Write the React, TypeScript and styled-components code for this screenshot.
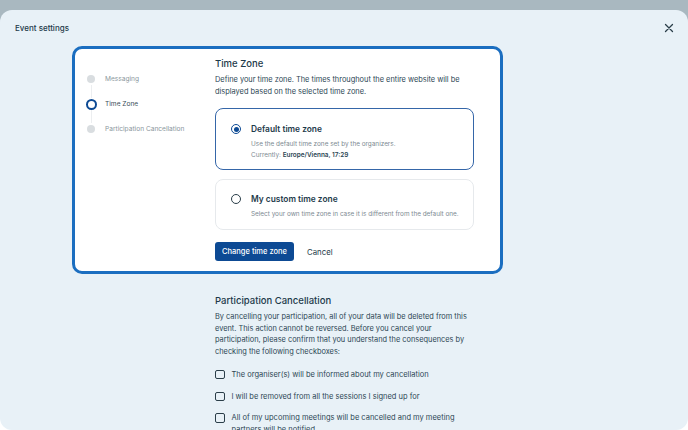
import * as React from 'react';
import styled, { createGlobalStyle } from 'styled-components';

const GlobalStyle = createGlobalStyle`
  html, body {
    margin: 0;
    padding: 0;
    background: linear-gradient(#a9b8c0 0, #a9b8c0 40px, #ffffff 40px);
    font-family: Inter, 'Noto Sans', sans-serif;
    color: #1d3a4a;
  }
  * { box-sizing: border-box; }
`;

const Backdrop = styled.div`
  width: 688px;
  height: 430px;
  padding-top: 10px;
  overflow: hidden;
`;

const Panel = styled.div`
  height: 420px;
  background: #e8f1f7;
  border-radius: 12px;
  display: flex;
  flex-direction: column;
  overflow: hidden;
`;

const Header = styled.div`
  flex: 0 0 36px;
  display: flex;
  align-items: center;
  justify-content: space-between;
  padding: 0 14px 0 15px;
`;

const HeaderTitle = styled.div`
  font-size: 8px;
  font-weight: 500;
  color: #1d3a4a;
`;

const CloseButton = styled.button`
  border: none;
  background: none;
  padding: 0;
  width: 10px;
  height: 10px;
  display: flex;
  cursor: pointer;
`;

const Body = styled.div`
  flex: 0 0 auto;
  padding: 0 0 0 72px;
`;

const HighlightCard = styled.div`
  width: 431px;
  height: 228px;
  background: #ffffff;
  border: 3px solid #1b6ec0;
  border-radius: 10px;
  display: flex;
  padding: 8px 0 9px 0;
`;

const Stepper = styled.div`
  flex: 0 0 140px;
  padding: 16px 0 0 10px;
  display: flex;
  flex-direction: column;
`;

const Step = styled.div`
  display: flex;
  align-items: center;
  gap: 8px;
  height: 12px;
`;

const DotSlot = styled.span`
  width: 12px;
  height: 12px;
  display: flex;
  align-items: center;
  justify-content: center;
  flex: 0 0 auto;
`;

const Dot = styled.span<{ active?: boolean }>`
  border-radius: 50%;
  width: ${(p) => (p.active ? 11 : 8)}px;
  height: ${(p) => (p.active ? 11 : 8)}px;
  border: ${(p) => (p.active ? '2px solid #0d4a94' : 'none')};
  background: ${(p) => (p.active ? '#ffffff' : '#d9dde0')};
`;

const Connector = styled.span`
  width: 1px;
  height: 13px;
  margin-left: 5.5px;
  background: #eceef0;
`;

const StepLabel = styled.span<{ active?: boolean }>`
  font-size: 6.6px;
  color: ${(p) => (p.active ? '#3a4d58' : '#8b979e')};
  white-space: nowrap;
`;

const Content = styled.div`
  flex: 1;
  min-width: 0;
  padding-right: 26px;
  display: flex;
  flex-direction: column;
`;

const SectionTitle = styled.h2`
  margin: 0;
  font-size: 9.5px;
  font-weight: 500;
  color: #1d3a4a;
  line-height: 14px;
`;

const Paragraph = styled.p`
  margin: 3px 0 0 0;
  font-size: 7.4px;
  line-height: 11.7px;
  color: #2c4654;
`;

const OptionCard = styled.div<{ selected?: boolean }>`
  margin-top: ${(p) => (p.selected ? 11 : 9)}px;
  height: ${(p) => (p.selected ? 62 : 51)}px;
  border: 1px solid ${(p) => (p.selected ? '#3566a8' : '#e6e9ec')};
  border-radius: 8px;
  padding: ${(p) => (p.selected ? '14px 8px 0 15px' : '13px 8px 0 15px')};
  display: flex;
  gap: 10px;
`;

const Radio = styled.span<{ checked?: boolean }>`
  width: 10px;
  height: 10px;
  margin-top: 1px;
  border-radius: 50%;
  border: 1.4px solid ${(p) => (p.checked ? '#0d4a94' : '#2a3e49')};
  flex: 0 0 auto;
  display: flex;
  align-items: center;
  justify-content: center;
  &::after {
    content: '';
    display: ${(p) => (p.checked ? 'block' : 'none')};
    width: 5px;
    height: 5px;
    border-radius: 50%;
    background: #0d4a94;
  }
`;

const OptionText = styled.div`
  display: flex;
  flex-direction: column;
`;

const OptionTitle = styled.div`
  font-size: 8.4px;
  font-weight: 600;
  color: #1d3a4a;
  line-height: 12px;
`;

const OptionHint = styled.div`
  margin-top: 4px;
  font-size: 6.4px;
  line-height: 10.5px;
  color: #7d8a92;
  white-space: nowrap;
  & b {
    font-weight: 600;
    color: #2c4654;
  }
`;

const Actions = styled.div`
  display: flex;
  align-items: center;
  gap: 13px;
  margin-top: 12px;
`;

const PrimaryButton = styled.button`
  border: none;
  border-radius: 3px;
  background: #0d4a94;
  color: #fff;
  font-family: inherit;
  font-size: 7.5px;
  font-weight: 500;
  height: 19px;
  width: 79px;
  padding: 0;
`;

const TextButton = styled.button`
  border: none;
  background: none;
  font-family: inherit;
  font-size: 7.8px;
  color: #1d3a4a;
  padding: 0;
`;

const Lower = styled.div`
  padding: 20px 0 0 143px;
  width: 402px;
`;

const CheckList = styled.div`
  margin-top: 11px;
  display: flex;
  flex-direction: column;
  gap: 10px;
`;

const CheckRow = styled.label`
  display: flex;
  gap: 7px;
  align-items: flex-start;
`;

const Box = styled.span`
  width: 9.5px;
  height: 9.5px;
  border: 1.4px solid #2a3e49;
  border-radius: 2px;
  flex: 0 0 auto;
  margin-top: 1px;
`;

const CheckLabel = styled.span`
  font-size: 7.5px;
  line-height: 11.7px;
  color: #2c4654;
  width: 242px;
`;

const steps = ['Messaging', 'Time Zone', 'Participation Cancellation'];

const checks = [
  'The organiser(s) will be informed about my cancellation',
  'I will be removed from all the sessions I signed up for',
  'All of my upcoming meetings will be cancelled and my meeting partners will be notified',
];

export default function App() {
  return (
    <>
      <GlobalStyle />
      <Backdrop>
        <Panel>
          <Header>
            <HeaderTitle>Event settings</HeaderTitle>
            <CloseButton aria-label="Close">
              <svg width="10" height="10" viewBox="0 0 10 10">
                <path d="M1.5 1.5 L8.5 8.5 M8.5 1.5 L1.5 8.5" stroke="#2a3e49" strokeWidth="1.3" strokeLinecap="round" />
              </svg>
            </CloseButton>
          </Header>
          <Body>
            <HighlightCard>
              <Stepper>
                {steps.map((s, i) => (
                  <React.Fragment key={s}>
                    {i > 0 && <Connector />}
                    <Step>
                      <DotSlot>
                        <Dot active={s === 'Time Zone'} />
                      </DotSlot>
                      <StepLabel active={s === 'Time Zone'}>{s}</StepLabel>
                    </Step>
                  </React.Fragment>
                ))}
              </Stepper>
              <Content>
                <SectionTitle>Time Zone</SectionTitle>
                <Paragraph>
                  Define your time zone. The times throughout the entire website will be displayed based on the
                  selected time zone.
                </Paragraph>
                <OptionCard selected>
                  <Radio checked />
                  <OptionText>
                    <OptionTitle>Default time zone</OptionTitle>
                    <OptionHint>
                      Use the default time zone set by the organizers.
                      <br />
                      Currently: <b>Europe/Vienna, 17:29</b>
                    </OptionHint>
                  </OptionText>
                </OptionCard>
                <OptionCard>
                  <Radio />
                  <OptionText>
                    <OptionTitle>My custom time zone</OptionTitle>
                    <OptionHint>Select your own time zone in case it is different from the default one.</OptionHint>
                  </OptionText>
                </OptionCard>
                <Actions>
                  <PrimaryButton>Change time zone</PrimaryButton>
                  <TextButton>Cancel</TextButton>
                </Actions>
              </Content>
            </HighlightCard>
            <Lower>
              <SectionTitle>Participation Cancellation</SectionTitle>
              <Paragraph>
                By cancelling your participation, all of your data will be deleted from this event. This action cannot
                be reversed. Before you cancel your participation, please confirm that you understand the consequences
                by checking the following checkboxes:
              </Paragraph>
              <CheckList>
                {checks.map((c) => (
                  <CheckRow key={c}>
                    <Box />
                    <CheckLabel>{c}</CheckLabel>
                  </CheckRow>
                ))}
              </CheckList>
            </Lower>
          </Body>
        </Panel>
      </Backdrop>
    </>
  );
}
